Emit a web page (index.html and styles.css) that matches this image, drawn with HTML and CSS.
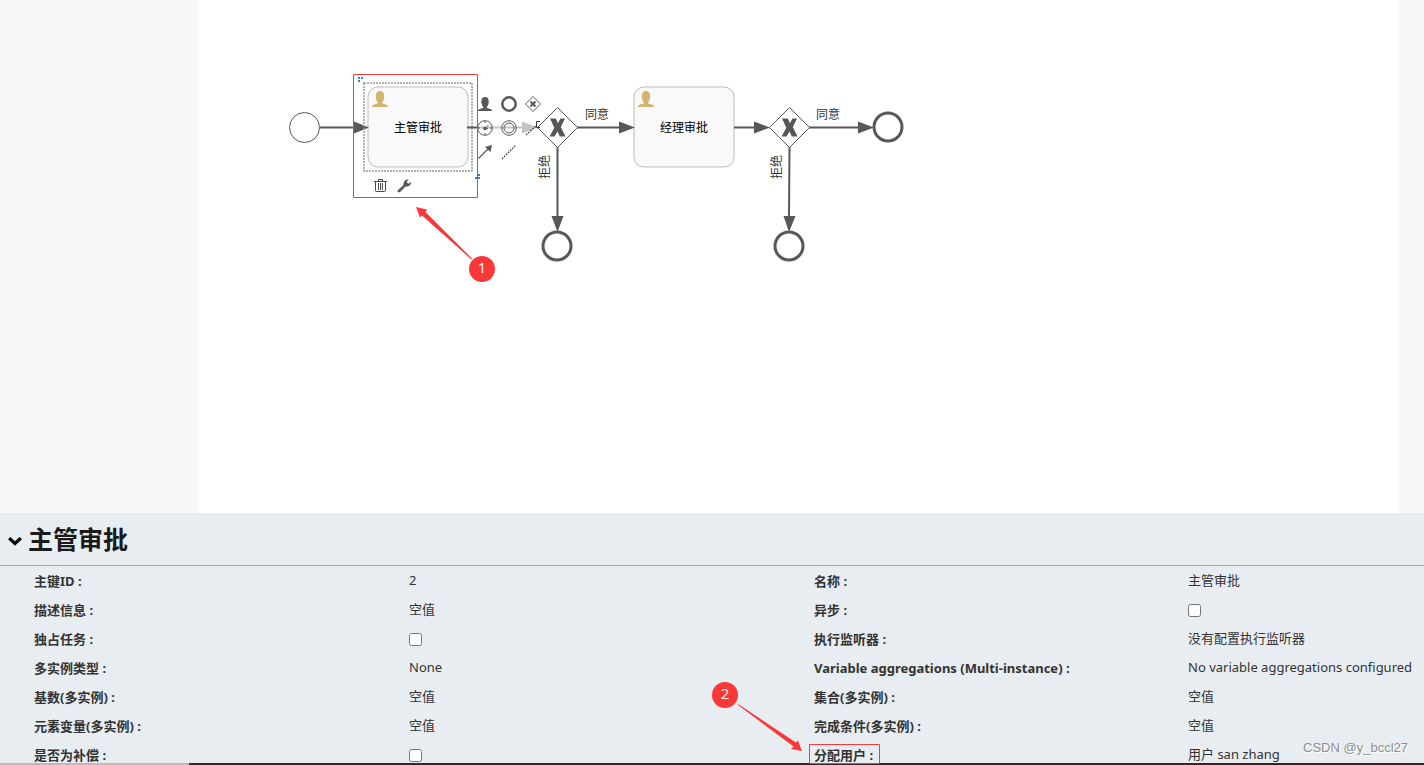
FILE: index.html
```html
<!DOCTYPE html>
<html lang="zh-CN">
<head>
<meta charset="utf-8">
<title>主管审批</title>
<meta name="viewport" content="width=device-width, initial-scale=1">
<link rel="stylesheet" href="styles.css">
</head>
<body>
<main class="editor">
  <section class="workspace">
    <div class="sheet"></div>
    <svg class="diagram" width="1424" height="513" viewBox="0 0 1424 513">
      <defs>
        <g id="user"><path d="M6 11.500C4.900 10.500 4.200 9 4.100 7.200C3.500 6.600 3.500 5.800 3.900 5.200C3.700 2 5.200 0 8 0S12.300 2 12.100 5.200C12.500 5.800 12.500 6.600 11.900 7.200C11.800 9 11.100 10.500 10 11.500V12.300C11.500 13 14.500 13.500 16 15V16H0V15C1.500 13.500 4.500 13 6 12.300z"/></g>
        <g id="gateway">
          <path class="thin" d="M0-20L20 0L0 20L-20 0z"/>
          <path class="solid" d="M-7.500-9H-1.700L.4-4.300L3-9H7.500L3.300-.5L8 9H2.300L0 3.900L-3 9H-8L-3.200 .2z"/>
        </g>
      </defs>
      <circle class="thin" cx="304.500" cy="127.500" r="15"/>
      <path class="flow" d="M320 127.500H355"/>
      <rect class="task" x="368" y="87" width="100" height="80" rx="10"/>
      <path class="solid" d="M354 121.500L369 127.500L354 133.500z"/>
      <rect class="task" x="634" y="87" width="100" height="80" rx="10"/>
      <use class="gold" href="#user" x="372" y="91"/>
      <use class="gold" href="#user" x="638" y="91"/>
      <text class="name" x="418" y="132">主管审批</text>
      <text class="name" x="684" y="132">经理审批</text>
      <rect class="selection" x="364" y="83" width="108" height="88"/>
      <path class="handle" d="M358 77h2v2h-2zM361 77h2v2h-2zM358 80h2v2h-2zM478 174h2v2h-2zM475 177h2v2h-2zM478 177h2v2h-2z"/>
      <path class="flow" d="M467 127.500H478"/>
      <g class="faded">
        <path class="flow" d="M478 127.500H524"/>
        <path class="solid" d="M522 121.500L538 127.500L522 133.500z"/>
      </g>
      <use href="#gateway" x="557.500" y="127.500"/>
      <use href="#gateway" x="789.500" y="127.500"/>
      <path class="flow" d="M577 127.500H621M734 127.500H756M809 127.500H860M557.500 147V217M789.500 147L789 217"/>
      <path class="solid" d="M619 121.500L635 127.500L619 133.500zM754 121.500L770 127.500L754 133.500zM858 121.500L874 127.500L858 133.500zM551.500 216H563.500L557.500 232zM783.500 216H795.500L789 232z"/>
      <circle class="thick" cx="888" cy="127" r="14"/>
      <circle class="thick" cx="557" cy="246" r="14"/>
      <circle class="thick" cx="789" cy="246" r="14"/>
      <text class="edge" x="597" y="119">同意</text>
      <text class="edge" x="828" y="119">同意</text>
      <text class="edge" transform="translate(549 167) rotate(-90)">拒绝</text>
      <text class="edge" transform="translate(781 167) rotate(-90)">拒绝</text>
    </svg>
    <div class="pad pad-create">
      <button type="button" aria-label="用户任务"><svg viewBox="0 0 16 16"><use class="solid" href="#user" transform="translate(1 1) scale(.88 .88)"/></svg></button>
      <button type="button" aria-label="结束事件"><svg viewBox="0 0 16 16"><circle class="ring" cx="8" cy="8" r="6.700"/></svg></button>
      <button type="button" aria-label="网关"><svg viewBox="0 0 16 16"><path class="thin" d="M8 .5L15.500 8L8 15.500L.5 8z"/><path class="cross" d="M5.500 5.500L10.500 10.500M10.500 5.500L5.500 10.500"/></svg></button>
      <button type="button" aria-label="定时器"><svg viewBox="0 0 16 16"><circle class="thin" cx="8" cy="8" r="7.300"/><path class="thin" d="M8 1v2M8 13v2M1 8h2M13 8h2M8 8.500L11.500 5M8 8.500l3 .3"/><circle class="solid" cx="8" cy="8.500" r="1.800"/></svg></button>
      <button type="button" aria-label="中间事件"><svg viewBox="0 0 16 16"><circle class="thin" cx="8" cy="8" r="7.300"/><circle class="thin" cx="8" cy="8" r="5"/></svg></button>
      <button type="button" aria-label="注释"><svg viewBox="0 0 16 16"><path class="dots" d="M1 15L11 6"/><path class="thin dark" d="M15 1.500H11.500V7.500H15"/></svg></button>
      <button type="button" aria-label="顺序流"><svg viewBox="0 0 16 16"><path class="flowline" d="M1.500 14.500L12 4"/><path class="solid" d="M15 1L13.500 8L8 3z"/></svg></button>
      <button type="button" aria-label="关联"><svg viewBox="0 0 16 16"><path class="dots" d="M1 15L15 1"/></svg></button>
    </div>
    <div class="pad pad-edit">
      <button type="button" aria-label="删除"><svg viewBox="0 0 16 16"><path class="trash" d="M2 3.500H15M6.500 3V1.500H10.500V3M3.500 4V12.500Q3.500 13.500 4.500 13.500H12.500Q13.500 13.500 13.500 12.500V4M6.500 5V12M8.500 5V12M10.500 5V12"/></svg></button>
      <button type="button" aria-label="更改类型"><svg viewBox="0 0 16 16"><path class="solid" d="M1.800 12.300L7.500 7C7 4 9.500 1 12.500 1.500L10.700 4L12.300 5.800L15 4C15.500 7 12.500 9.200 9.500 8.500L4.200 14C2.500 15 .8 13.800 1.800 12.300z"/></svg></button>
    </div>
  </section>

  <section class="properties">
    <h1 class="title">
      <button class="toggle" type="button" aria-label="折叠"><svg viewBox="0 0 14 10"><path d="M0 3.300L2.300 1L7 5.300L11.700 1L14 3.300L7 9.800z"/></svg></button>
      主管审批
    </h1>
    <dl class="fields">
      <dt>主键ID :</dt><dd>2</dd>
      <dt>名称 :</dt><dd>主管审批</dd>
      <dt>描述信息 :</dt><dd>空值</dd>
      <dt><label for="async">异步 :</label></dt><dd><input id="async" type="checkbox"></dd>
      <dt><label for="exclusive">独占任务 :</label></dt><dd><input id="exclusive" type="checkbox"></dd>
      <dt>执行监听器 :</dt><dd>没有配置执行监听器</dd>
      <dt>多实例类型 :</dt><dd>None</dd>
      <dt>Variable aggregations (Multi-instance) :</dt><dd>No variable aggregations configured</dd>
      <dt>基数(多实例) :</dt><dd>空值</dd>
      <dt>集合(多实例) :</dt><dd>空值</dd>
      <dt>元素变量(多实例) :</dt><dd>空值</dd>
      <dt>完成条件(多实例) :</dt><dd>空值</dd>
      <dt><label for="compensation">是否为补偿 :</label></dt><dd><input id="compensation" type="checkbox"></dd>
      <dt>分配用户 :</dt><dd>用户 san zhang</dd>
    </dl>
  </section>
  <div class="edge-strip"></div>

  <svg class="marks" width="1424" height="765" viewBox="0 0 1424 765">
    <path class="box" d="M353.500 74.500H477.500V197.500H353.500zM809.500 744.500H879.500V763.500H809.500z"/>
    <path class="arrow" d="M416 207L427 209.500L425.500 212L472.500 259L471.500 259.500L422 215.500L420 217.500z"/>
    <path class="arrow" d="M738 704L796 742.500L798 740.500L802 751L791 749L793.500 746.500L738 705z"/>
    <circle class="arrow" cx="482" cy="269" r="13"/>
    <circle class="arrow" cx="725" cy="695" r="13"/>
    <text x="482" y="273">1</text>
    <text x="725" y="699">2</text>
  </svg>
  <p class="credit">CSDN @y_bccl27</p>
</main>
</body>
</html>
```
FILE: styles.css
```css
* { box-sizing: border-box; }

body {
  margin: 0;
  background: #e8edf1;
  color: #333;
  font: 13px/18px "Noto Sans", "Noto Sans CJK SC", sans-serif;
}

.editor {
  position: relative;
  display: flex;
  flex-direction: column;
  height: 100vh;
  overflow: hidden;
}

.workspace {
  position: relative;
  display: flex;
  flex: none;
  padding: 0 25px 0 199px;
  background: #f8f8f8;
}

.sheet { flex: 1; min-height: 513px; background: #fff; }

.diagram { position: absolute; left: 0; top: 0; }

.thin { fill: none; stroke: #585858; stroke-width: 1; }
.thick { fill: none; stroke: #585858; stroke-width: 3; }
.ring { fill: none; stroke: #585858; stroke-width: 2.5; }
.cross { fill: none; stroke: #585858; stroke-width: 2; }
.solid { fill: #585858; }
.gold { fill: #d2b46e; }
.flow { fill: none; stroke: #585858; stroke-width: 2; }
.flowline { fill: none; stroke: #585858; stroke-width: 1.2; }
.faded { opacity: .35; }
.dots { fill: none; stroke: #444; stroke-width: 1.3; stroke-dasharray: 1.8 1; }
.dark { stroke: #333; }
.task { fill: #f9f9f9; stroke: #bbb; stroke-width: 1; }
.selection { fill: none; stroke: #999; stroke-width: 1.5; stroke-dasharray: 2 1; }
.handle { fill: #4a7ab5; }
.trash { fill: none; stroke: #484848; stroke-width: 1; }

.diagram text {
  font-family: "Noto Sans CJK SC", sans-serif;
  font-size: 12px;
  text-anchor: middle;
}
.name { fill: #000; }
.edge { fill: #333; }

.pad {
  position: absolute;
  display: grid;
  grid-auto-rows: 24px;
}
.pad-create { left: 473px; top: 92px; grid-template-columns: repeat(3, 24px); }
.pad-edit { left: 368px; top: 174px; grid-template-columns: repeat(2, 24px); }

.pad button {
  display: grid;
  place-items: center;
  padding: 0;
  border: 0;
  background: none;
}
.pad svg { width: 16px; height: 16px; }

.properties { flex: 1; min-height: 0; }

.title {
  display: flex;
  align-items: center;
  gap: 6px;
  height: 53px;
  margin: 0;
  padding-left: 8px;
  border-bottom: 1px solid #a4acb9;
  color: #1a1a1a;
  font-size: 25px;
  line-height: 52px;
}

.toggle {
  display: flex;
  padding: 4px 0 0;
  border: 0;
  background: none;
}
.toggle svg { width: 14px; height: 10px; }

.fields {
  display: grid;
  grid-template-columns: 375fr 405fr 374fr 236fr;
  grid-auto-rows: 29px;
  margin: 0;
  padding-left: 34px;
}

.fields dt {
  padding-top: 6px;
  font-weight: 700;
  white-space: nowrap;
}
.fields dd {
  margin: 0;
  padding-top: 5px;
  white-space: nowrap;
}
.fields input {
  display: block;
  width: 13px;
  height: 13px;
  margin: 4px 0 0;
}

.edge-strip {
  position: relative;
  flex: none;
  height: 2px;
  background: linear-gradient(90deg, #b9bcbe 189px, #2b2a2c 189px);
}

.marks { position: absolute; left: 0; top: 0; pointer-events: none; }
.marks text {
  fill: #fff;
  font-family: "Open Sans", sans-serif;
  font-size: 15px;
  text-anchor: middle;
}
.box { fill: none; stroke: #f93a3a; stroke-width: 1; }
.arrow { fill: #fb3838; }

.credit {
  position: absolute;
  right: 16px;
  bottom: 7px;
  margin: 0;
  color: #8b8f93;
  font: 13px/20px "Liberation Sans", sans-serif;
  text-shadow: 1px 1px 0 #fff;
}
```
